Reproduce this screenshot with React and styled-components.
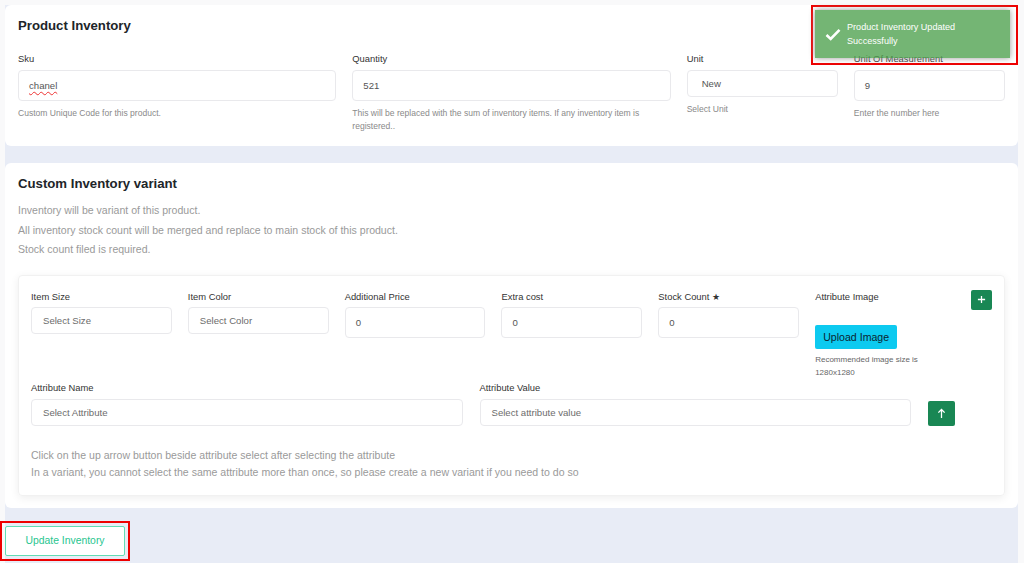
import React from "react";
import styled, { createGlobalStyle } from "styled-components";

const GlobalStyle = createGlobalStyle`
  html, body {
    margin: 0;
    padding: 0;
    background: #f9f9fa;
    font-family: "Liberation Sans", Arial, sans-serif;
  }
  * { box-sizing: border-box; }
`;

const topFields = [
  { label: "Sku", value: "chanel", help: "Custom Unique Code for this product.", span: 4, spell: true },
  {
    label: "Quantity",
    value: "521",
    help: "This will be replaced with the sum of inventory items. If any inventory item is registered..",
    span: 4,
  },
  { label: "Unit", value: "New", help: "Select Unit", span: 2, select: true },
  { label: "Unit Of Measurement", value: "9", help: "Enter the number here", span: 2 },
];

const variantFields = [
  { label: "Item Size", value: "Select Size", select: true },
  { label: "Item Color", value: "Select Color", select: true },
  { label: "Additional Price", value: "0" },
  { label: "Extra cost", value: "0" },
  { label: "Stock Count ★", value: "0" },
];

const App = () => {
  return (
    <>
      <GlobalStyle />
      <Page>
        <Main>
          <Card bottom={13.5}>
            <CardTitle>Product Inventory</CardTitle>
            <Row>
              {topFields.map((f) => (
                <Col key={f.label} span={f.span}>
                  <Label gap={6.5}>{f.label}</Label>
                  <Field select={f.select}>
                    <FieldText spell={f.spell} select={f.select}>
                      {f.value}
                    </FieldText>
                  </Field>
                  <Help>{f.help}</Help>
                </Col>
              ))}
            </Row>
          </Card>

          <Card bottom={12}>
            <CardTitle>Custom Inventory variant</CardTitle>
            <Intro>
              <p>Inventory will be variant of this product.</p>
              <p>All inventory stock count will be merged and replace to main stock of this product.</p>
              <p>Stock count filed is required.</p>
            </Intro>

            <VariantBox>
              <VariantTop>
                <VariantGrid>
                  {variantFields.map((f) => (
                    <div key={f.label}>
                      <Label>{f.label}</Label>
                      <Field select={f.select}>
                        <FieldText muted={f.select}>{f.value}</FieldText>
                      </Field>
                    </div>
                  ))}
                  <div>
                    <Label>Attribute Image</Label>
                    <UploadButton>Upload Image</UploadButton>
                    <SmallNote>Recommended image size is 1280x1280</SmallNote>
                  </div>
                </VariantGrid>
                <GreenButton wide={21} tall={20}>
                  <svg width="9" height="9" viewBox="0 0 10 10">
                    <path d="M5 1v8M1 5h8" stroke="#fff" strokeWidth="1.4" />
                  </svg>
                </GreenButton>
              </VariantTop>

              <AttributeRow>
                <div>
                  <Label>Attribute Name</Label>
                  <Field select>
                    <FieldText muted>Select Attribute</FieldText>
                  </Field>
                </div>
                <div>
                  <Label>Attribute Value</Label>
                  <Field select>
                    <FieldText muted>Select attribute value</FieldText>
                  </Field>
                </div>
                <GreenButton wide={27} tall={25}>
                  <svg width="9" height="11" viewBox="0 0 10 12">
                    <path d="M5 11V1.5M1.5 5L5 1.5 8.5 5" stroke="#fff" strokeWidth="1.4" fill="none" />
                  </svg>
                </GreenButton>
              </AttributeRow>

              <Notes>
                <p>Click on the up arrow button beside attribute select after selecting the attribute</p>
                <p>
                  In a variant, you cannot select the same attribute more than once, so please create a new
                  variant if you need to do so
                </p>
              </Notes>
            </VariantBox>
          </Card>

          <Footer>
            <Marked>
              <UpdateButton>Update Inventory</UpdateButton>
            </Marked>
          </Footer>
        </Main>

        <ToastMark>
          <Toast>
            <svg width="16" height="13" viewBox="0 0 16 13">
              <path d="M1.5 7l4.2 4L14.5 1.8" stroke="#fff" strokeWidth="2.6" fill="none" />
            </svg>
            <ToastText>Product Inventory Updated Successfully</ToastText>
          </Toast>
        </ToastMark>
      </Page>
    </>
  );
};

const Page = styled.div`
  position: relative;
  height: 563px;
  padding: 5px 6px 0 5px;
  overflow: hidden;
`;

const Main = styled.div`
  height: 100%;
  background: #e8ecf6;
  display: flex;
  flex-direction: column;
  gap: 17px;
`;

const Card = styled.div`
  background: #fff;
  border-radius: 6px;
  padding: 13px 13px ${(p) => p.bottom}px;
`;

const CardTitle = styled.h2`
  margin: 0;
  font-size: 13.2px;
  line-height: 16px;
  font-weight: 700;
  color: #212529;
`;

const Row = styled.div`
  display: flex;
  margin: 18.5px -8px 0;
`;

const Col = styled.div`
  flex: 0 0 ${(p) => (p.span / 12) * 100}%;
  padding: 0 8px;
`;

const Label = styled.div`
  font-size: 9.4px;
  line-height: 11px;
  color: #333;
  margin-bottom: ${(p) => p.gap || 5.5}px;
  white-space: nowrap;
`;

const Field = styled.div`
  height: ${(p) => (p.select ? "27px" : "31px")};
  border: 1px solid #e9e9ec;
  border-radius: 4px;
  background: #fff;
  display: flex;
  align-items: center;
  padding-left: ${(p) => (p.select ? "11px" : "10px")};
`;

const FieldText = styled.span`
  font-size: 9.6px;
  color: ${(p) => (p.muted ? "#6c6c6c" : "#555")};
  padding-left: ${(p) => (p.select && !p.muted ? "3px" : "0")};
  text-decoration: ${(p) => (p.spell ? "underline wavy #e33" : "none")};
  text-decoration-thickness: 1px;
  text-underline-offset: 2px;
`;

const Help = styled.div`
  margin-top: 5.5px;
  font-size: 8.55px;
  line-height: 13px;
  color: #8a8a8a;
`;

const Intro = styled.div`
  margin: 9px 0 15px;
  font-size: 10.55px;
  line-height: 19.5px;
  color: #9a9a9a;
  p {
    margin: 0;
  }
`;

const VariantBox = styled.div`
  border-radius: 4px;
  border: 1px solid #f1f1f1;
  box-shadow: 0 2px 8px rgba(0, 0, 0, 0.07);
  padding: 14px 12px 14px;
`;

const VariantTop = styled.div`
  display: flex;
  align-items: flex-start;
  gap: 15px;
`;

const VariantGrid = styled.div`
  flex: 1;
  display: grid;
  grid-template-columns: repeat(6, 1fr);
  column-gap: 16px;
  padding-top: 1px;
`;

const GreenButton = styled.button`
  width: ${(p) => p.wide}px;
  height: ${(p) => p.tall}px;
  flex: none;
  padding: 0;
  border: none;
  border-radius: 2px;
  background: #198754;
  display: flex;
  align-items: center;
  justify-content: center;
`;

const UploadButton = styled.button`
  margin-top: 18px;
  width: 82px;
  height: 24px;
  padding: 0;
  border: none;
  border-radius: 2px;
  background: #0dcaf0;
  color: #0b2530;
  font-family: inherit;
  font-size: 10.6px;
`;

const SmallNote = styled.div`
  margin-top: 5px;
  font-size: 8px;
  line-height: 12.5px;
  color: #666;
  width: 110px;
`;

const AttributeRow = styled.div`
  display: grid;
  grid-template-columns: 1fr 1fr 27px;
  column-gap: 17px;
  align-items: end;
  padding-right: 37px;
  margin-top: 3px;
`;

const Notes = styled.div`
  margin-top: 21px;
  font-size: 10.55px;
  line-height: 17px;
  color: #9a9a9a;
  p {
    margin: 0;
  }
`;

const Footer = styled.div`
  padding-top: 1px;
`;

const Marked = styled.div`
  display: inline-block;
  outline: 2px solid #ee0000;
  outline-offset: 3px;
`;

const UpdateButton = styled.button`
  display: block;
  width: 120px;
  height: 30px;
  background: #fff;
  border: 1px solid #63dcb4;
  border-radius: 2px;
  color: #28c58f;
  font-family: inherit;
  font-size: 10.4px;
`;

const ToastMark = styled.div`
  position: absolute;
  top: 5px;
  left: 811px;
  width: 207px;
  height: 60px;
  border: 2px solid #ee0000;
  padding: 3px 6px 0 2px;
`;

const Toast = styled.div`
  height: 48px;
  background: rgba(81, 163, 81, 0.8);
  box-shadow: 0 0 6px #999;
  display: flex;
  align-items: center;
  gap: 6px;
  padding: 0 10px;
`;

const ToastText = styled.div`
  font-size: 9.1px;
  line-height: 14px;
  color: #fff;
  width: 125px;
`;

export default App;
